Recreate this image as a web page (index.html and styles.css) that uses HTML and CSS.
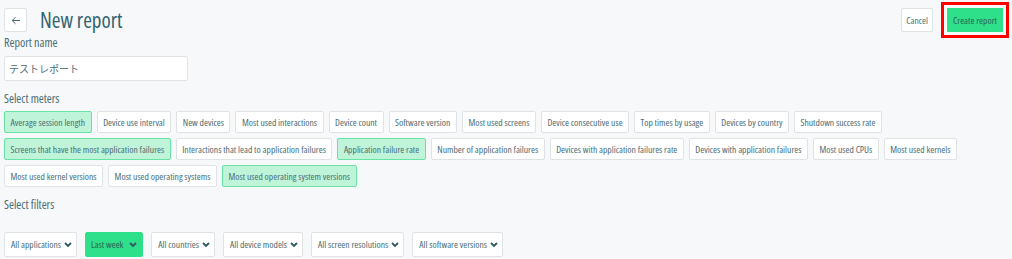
FILE: index.html
```html
<!DOCTYPE html>
<html>
<head>
    <title>New report</title>
    <link rel="stylesheet" href="styles.css">
</head>
<body>
    <div class="header">
        <button class="back-btn" aria-label="Back">
            <svg width="10" height="9" viewBox="0 0 10 9"><path d="M9 4.5H1.5M4.5 1.2L1.2 4.5l3.3 3.3" fill="none" stroke="#3d6670" stroke-width="1"/></svg>
        </button>
        <h1 class="title">New report</h1>
        <div class="actions">
            <button class="btn">Cancel</button>
            <button class="btn btn-primary highlighted">Create report</button>
        </div>
    </div>

    <div class="section">
        <div class="label">Report name</div>
        <input class="name-input" type="text" value="テストレポート">
    </div>

    <div class="section">
        <div class="label">Select meters</div>
        <div class="chips">
            <span class="chip selected">Average session length</span>
            <span class="chip">Device use interval</span>
            <span class="chip">New devices</span>
            <span class="chip">Most used interactions</span>
            <span class="chip">Device count</span>
            <span class="chip">Software version</span>
            <span class="chip">Most used screens</span>
            <span class="chip">Device consecutive use</span>
            <span class="chip">Top times by usage</span>
            <span class="chip">Devices by country</span>
            <span class="chip">Shutdown success rate</span>
            <span class="chip selected">Screens that have the most application failures</span>
            <span class="chip">Interactions that lead to application failures</span>
            <span class="chip selected">Application failure rate</span>
            <span class="chip">Number of application failures</span>
            <span class="chip">Devices with application failures rate</span>
            <span class="chip">Devices with application failures</span>
            <span class="chip">Most used CPUs</span>
            <span class="chip">Most used kernels</span>
            <span class="chip">Most used kernel versions</span>
            <span class="chip">Most used operating systems</span>
            <span class="chip selected">Most used operating system versions</span>
        </div>
    </div>

    <div class="section filters-section">
        <div class="label">Select filters</div>
        <div class="filters">
            <button class="filter">All applications <svg class="chev" width="8" height="6" viewBox="0 0 8 6"><path d="M1 1l3 3 3-3" fill="none" stroke="#2f5962" stroke-width="1.8"/></svg></button>
            <button class="filter active">Last week <svg class="chev" width="8" height="6" viewBox="0 0 8 6"><path d="M1 1l3 3 3-3" fill="none" stroke="#2f5962" stroke-width="1.8"/></svg></button>
            <button class="filter">All countries <svg class="chev" width="8" height="6" viewBox="0 0 8 6"><path d="M1 1l3 3 3-3" fill="none" stroke="#2f5962" stroke-width="1.8"/></svg></button>
            <button class="filter">All device models <svg class="chev" width="8" height="6" viewBox="0 0 8 6"><path d="M1 1l3 3 3-3" fill="none" stroke="#2f5962" stroke-width="1.8"/></svg></button>
            <button class="filter">All screen resolutions <svg class="chev" width="8" height="6" viewBox="0 0 8 6"><path d="M1 1l3 3 3-3" fill="none" stroke="#2f5962" stroke-width="1.8"/></svg></button>
            <button class="filter">All software versions <svg class="chev" width="8" height="6" viewBox="0 0 8 6"><path d="M1 1l3 3 3-3" fill="none" stroke="#2f5962" stroke-width="1.8"/></svg></button>
        </div>
    </div>
</body>
</html>
```

FILE: styles.css
```css
:root {
    --text: #4a6d75;
    --title: #336470;
    --border: #dfe3e6;
    --bg: #f7f8fa;
    --green: #2fe08b;
    --green-light: #c0f4d8;
    --green-border: #66e3a5;
}

body {
    font-family: 'Open Sans', 'Noto Sans CJK JP', sans-serif;
    font-stretch: 75%;
    margin: 0;
    padding: 0 9px 0 4px;
    background: var(--bg);
    color: var(--text);
}

button {
    font-family: inherit;
    font-stretch: inherit;
    cursor: pointer;
}

.header {
    display: flex;
    align-items: center;
    padding-top: 8px;
    height: 24px;
}

.back-btn {
    width: 23px;
    height: 24px;
    padding: 0;
    background: white;
    border: 1px solid var(--border);
    border-radius: 2px;
    display: flex;
    align-items: center;
    justify-content: center;
}

.title {
    margin: 0 0 0 13px;
    font-size: 21px;
    font-weight: 400;
    color: var(--title);
    line-height: 24px;
}

.actions {
    margin-left: auto;
    display: flex;
    gap: 14px;
}

.btn {
    height: 24px;
    padding: 0 4px;
    background: white;
    border: 1px solid var(--border);
    border-radius: 2px;
    font-size: 9.6px;
    color: var(--text);
}

.btn-primary {
    padding: 0 5px;
    background: var(--green);
    border-color: var(--green);
    color: #2c5f55;
}

.highlighted {
    border-radius: 0;
    outline: 3px solid #ff0000;
    outline-offset: 3px;
}

.label {
    font-size: 12px;
    line-height: 16px;
}

.section {
    margin-top: 3px;
}

.name-input {
    display: block;
    margin-top: 5px;
    width: 184px;
    height: 25px;
    box-sizing: border-box;
    padding: 0 4px;
    border: 1px solid var(--border);
    border-radius: 2px;
    background: white;
    font-family: 'Noto Sans CJK JP', sans-serif;
    font-size: 10px;
    color: var(--text);
}

.section + .section {
    margin-top: 10px;
}

.chips {
    display: flex;
    flex-wrap: wrap;
    gap: 5px;
    margin-top: 4px;
}

.chip {
    display: flex;
    align-items: center;
    height: 22px;
    box-sizing: border-box;
    padding: 0 5.5px;
    background: white;
    border: 1px solid var(--border);
    border-radius: 2px;
    font-size: 9.6px;
    white-space: nowrap;
}

.chip.selected {
    background: var(--green-light);
    border-color: var(--green-border);
}

.filters-section {
    margin-top: 9px;
}

.filters {
    display: flex;
    gap: 8px;
    margin-top: 19px;
}

.filter {
    display: flex;
    align-items: center;
    gap: 3px;
    height: 25px;
    padding: 0 4px 0 6px;
    background: white;
    border: 1px solid var(--border);
    border-radius: 2px;
    font-size: 9.6px;
    color: var(--text);
}

.filter.active {
    background: var(--green);
    border-color: var(--green);
    color: #2c5f55;
    gap: 6px;
    padding: 0 5px;
}

.chev {
    display: block;
}
```
